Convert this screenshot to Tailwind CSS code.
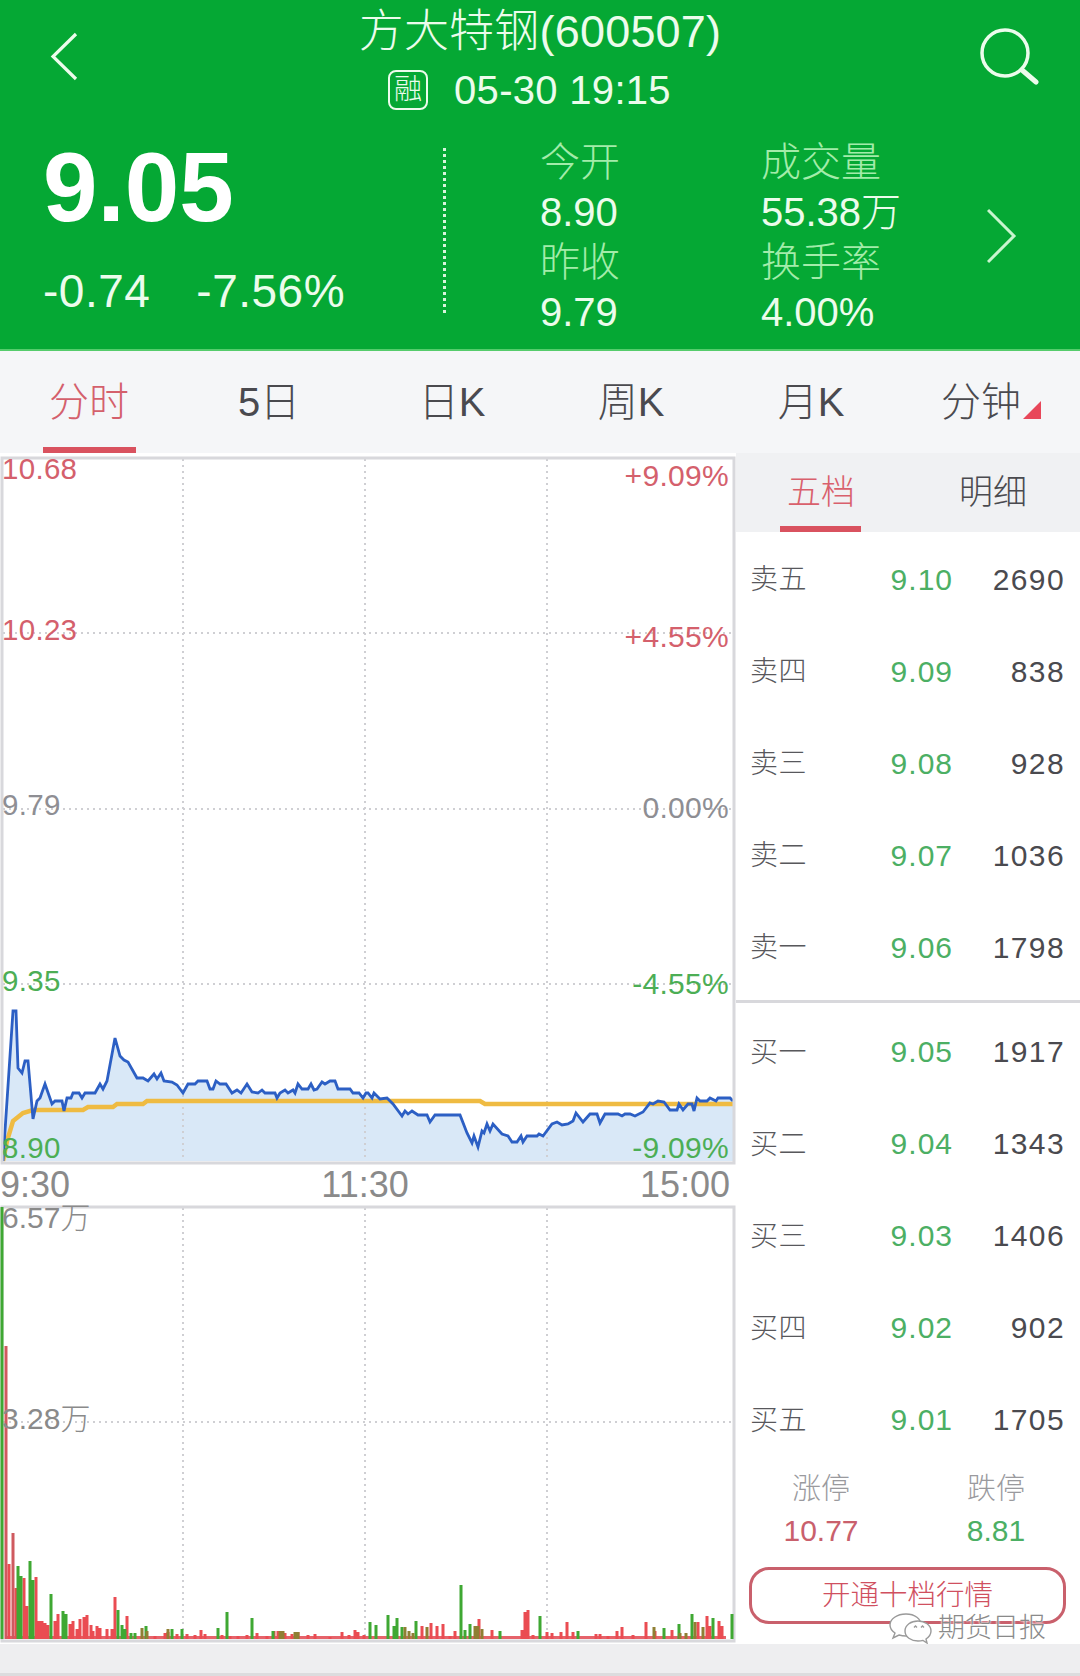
<!DOCTYPE html>
<html lang="zh">
<head>
<meta charset="utf-8">
<script src="https://cdn.jsdelivr.net/npm/@tailwindcss/browser@4"></script>
</head>
<body class="m-0">
<div class="relative w-[1080px] h-[1676px] overflow-hidden bg-[#f7f7f8] font-['Liberation_Sans','Noto_Sans_CJK_SC',sans-serif] font-light">

  <!-- green header -->
  <header class="h-[351px] bg-[#05a834] text-[#ecfcec] flex flex-col border-b-2 border-[#55cc6c]">
    <div class="h-[116px] flex">
      <div class="w-[180px] pl-[50px] pt-[32px]">
        <svg width="30" height="50" viewBox="0 0 30 50" fill="none" stroke="#ecfcec" stroke-width="3.2"><path d="M26 2 L3 24.5 L26 47"/></svg>
      </div>
      <div class="flex-1 flex flex-col items-center">
        <div class="h-[64px] flex items-center text-[45px] tracking-[0.2px] whitespace-nowrap">方大特钢(600507)</div>
        <div class="h-[52px] flex items-center gap-[26px] pr-[21px]">
          <span class="w-[40px] h-[40px] rounded-[8px] border-[2.5px] border-[#ecfcec] flex items-center justify-center text-[28px] leading-none">融</span>
          <span class="text-[40px] tracking-[0.3px] whitespace-nowrap">05-30 19:15</span>
        </div>
      </div>
      <div class="w-[180px] pl-[80px] pt-[27px]">
        <svg width="60" height="58" viewBox="0 0 60 58" fill="none" stroke="#ecfcec"><circle cx="25" cy="26" r="23" stroke-width="3.5"/><path d="M42 43 L56 55" stroke-width="5" stroke-linecap="round"/></svg>
      </div>
    </div>
    <div class="flex-1 flex">
      <div class="w-[443px] pl-[43px]">
        <div class="h-[142px] flex items-center text-[98px] font-bold text-white leading-none">9.05</div>
        <div class="h-[66px] flex items-center text-[46px] gap-[46px] tracking-[0.5px]"><span>-0.74</span><span>-7.56%</span></div>
      </div>
      <div class="mt-[32px] h-[165px] border-l-[3px] border-dotted border-[#d8f5dc]"></div>
      <div class="ml-[94px] w-[221px] pt-[21px] text-[40px]">
        <div class="h-[50px] flex items-center text-[#a3ecaa]">今开</div>
        <div class="h-[50px] flex items-center">8.90</div>
        <div class="h-[50px] flex items-center text-[#a3ecaa]">昨收</div>
        <div class="h-[50px] flex items-center">9.79</div>
      </div>
      <div class="w-[226px] pt-[21px] text-[40px]">
        <div class="h-[50px] flex items-center text-[#a3ecaa]">成交量</div>
        <div class="h-[50px] flex items-center">55.38万</div>
        <div class="h-[50px] flex items-center text-[#a3ecaa]">换手率</div>
        <div class="h-[50px] flex items-center">4.00%</div>
      </div>
      <div class="pt-[92px]">
        <svg width="30" height="56" viewBox="0 0 30 56" fill="none" stroke="#c9f5cf" stroke-width="3"><path d="M1 2 L27 28 L1 54"/></svg>
      </div>
    </div>
  </header>

  <!-- period tabs -->
  <nav class="h-[102px] bg-[#f5f6f8] flex text-[40px] text-[#4a4a4f]">
    <div class="relative w-[178px] flex items-center justify-center text-[#d4606c]">分时<span class="absolute left-[43px] bottom-0 w-[93px] h-[6px] bg-[#d9525f]"></span></div>
    <div class="w-[182px] flex items-center justify-center">5日</div>
    <div class="w-[184px] flex items-center justify-center">日K</div>
    <div class="w-[174px] flex items-center justify-center">周K</div>
    <div class="w-[186px] flex items-center justify-center">月K</div>
    <div class="relative w-[154px] flex items-center justify-center">分钟
      <svg class="absolute left-[119px] top-[50px]" width="18" height="18" viewBox="0 0 18 18"><path d="M0 18 L18 0 V18 Z" fill="#e8475a"/></svg>
    </div>
  </nav>

  <main class="flex h-[1191px]">
    <!-- charts -->
    <section class="w-[736px] bg-white flex flex-col">
      <div class="relative h-[712px]">
        <svg class="absolute inset-0" width="736" height="712" viewBox="0 452 736 712" fill="none">
          <g stroke="#cfcfd3" stroke-width="2" stroke-dasharray="2 4">
            <path d="M183 458V1160M365 458V1160M547 458V1160M3 632H733M3 808H733M3 983H733"/>
          </g>
          <path fill="#d9e8f7" stroke="none" d="M3 1160L13 1010L16 1010L18 1067L22 1072L25 1060L28 1060L33 1118L37 1100L40 1097L45 1083L52 1103L55 1100L62 1100L64 1110L67 1097L71 1097L73 1092L79 1092L82 1097L85 1092L95 1092L100 1083L103 1088L107 1080L115 1037L120 1055L124 1059L128 1061L137 1077L143 1077L148 1080L154 1073L157 1078L161 1072L164 1080L172 1081L177 1084L183 1092L188 1083L195 1083L198 1080L207 1080L210 1088L213 1088L216 1080L220 1083L226 1083L232 1092L237 1089L241 1092L247 1083L252 1091L258 1092L262 1089L265 1092L275 1092L277 1097L280 1092L285 1089L288 1092L293 1089L295 1092L298 1083L302 1088L308 1088L311 1083L314 1089L317 1088L322 1081L325 1083L330 1080L335 1080L338 1088L350 1088L353 1092L359 1092L363 1097L366 1092L368 1092L372 1097L374 1092L380 1098L387 1097L393 1103L402 1115L405 1110L408 1113L412 1110L418 1114L427 1114L430 1121L435 1114L460 1114L467 1132L472 1142L474 1135L478 1146L482 1130L484 1132L487 1123L490 1130L493 1123L502 1133L508 1135L512 1141L517 1141L521 1135L523 1141L527 1135L537 1135L539 1133L543 1135L552 1123L557 1121L562 1124L568 1123L573 1120L576 1112L583 1121L590 1113L597 1113L600 1122L605 1113L618 1113L622 1115L625 1113L630 1113L635 1115L643 1111L650 1102L653 1103L658 1100L664 1101L670 1109L677 1109L679 1103L683 1109L688 1103L692 1103L694 1110L697 1097L700 1100L707 1100L710 1097L716 1100L718 1097L730 1097L733 1100V1160Z"/>
          <path stroke="#cfcfd3" stroke-width="2" stroke-dasharray="2 4" d="M183 1040V1160M365 1040V1160M547 1100V1160"/>
          <path stroke="#efbb42" stroke-width="4.5" d="M3 1160L7 1140L13 1120L23 1112L33 1109L83 1109L88 1106L113 1106L117 1103L143 1103L147 1100L480 1100L485 1103L733 1103"/>
          <path stroke="#2c5fc4" stroke-width="2.8" stroke-linejoin="miter" d="M3 1160L13 1010L16 1010L18 1067L22 1072L25 1060L28 1060L33 1118L37 1100L40 1097L45 1083L52 1103L55 1100L62 1100L64 1110L67 1097L71 1097L73 1092L79 1092L82 1097L85 1092L95 1092L100 1083L103 1088L107 1080L115 1037L120 1055L124 1059L128 1061L137 1077L143 1077L148 1080L154 1073L157 1078L161 1072L164 1080L172 1081L177 1084L183 1092L188 1083L195 1083L198 1080L207 1080L210 1088L213 1088L216 1080L220 1083L226 1083L232 1092L237 1089L241 1092L247 1083L252 1091L258 1092L262 1089L265 1092L275 1092L277 1097L280 1092L285 1089L288 1092L293 1089L295 1092L298 1083L302 1088L308 1088L311 1083L314 1089L317 1088L322 1081L325 1083L330 1080L335 1080L338 1088L350 1088L353 1092L359 1092L363 1097L366 1092L368 1092L372 1097L374 1092L380 1098L387 1097L393 1103L402 1115L405 1110L408 1113L412 1110L418 1114L427 1114L430 1121L435 1114L460 1114L467 1132L472 1142L474 1135L478 1146L482 1130L484 1132L487 1123L490 1130L493 1123L502 1133L508 1135L512 1141L517 1141L521 1135L523 1141L527 1135L537 1135L539 1133L543 1135L552 1123L557 1121L562 1124L568 1123L573 1120L576 1112L583 1121L590 1113L597 1113L600 1122L605 1113L618 1113L622 1115L625 1113L630 1113L635 1115L643 1111L650 1102L653 1103L658 1100L664 1101L670 1109L677 1109L679 1103L683 1109L688 1103L692 1103L694 1110L697 1097L700 1100L707 1100L710 1097L716 1100L718 1097L730 1097L733 1100"/>
          <path stroke="#d8d8dc" stroke-width="3" d="M2 457H734V1162H2Z"/>
        </svg>
        <div class="absolute inset-0 text-[29.5px] leading-[36px] tracking-[0.3px]">
          <span class="absolute left-[2px] top-[-2px] text-[#d4606c]">10.68</span>
          <span class="absolute right-[7px] top-[5px] text-[30px] text-[#d4606c]">+9.09%</span>
          <span class="absolute left-[2px] top-[159px] text-[#d4606c]">10.23</span>
          <span class="absolute right-[7px] top-[166px] text-[30px] text-[#d4606c]">+4.55%</span>
          <span class="absolute left-[2px] top-[334px] text-[#8e8e93]">9.79</span>
          <span class="absolute right-[7px] top-[337px] text-[30px] text-[#8e8e93]">0.00%</span>
          <span class="absolute left-[2px] top-[510px] text-[#4cae55]">9.35</span>
          <span class="absolute right-[7px] top-[513px] text-[30px] text-[#4cae55]">-4.55%</span>
          <span class="absolute left-[2px] top-[677px] text-[#4cae55]">8.90</span>
          <span class="absolute right-[7px] top-[677px] text-[30px] text-[#4cae55]">-9.09%</span>
        </div>
      </div>
      <div class="h-[40px] flex justify-between items-center pr-[6px] text-[36px] text-[#8a8a8a] leading-none">
        <span>9:30</span><span class="ml-[20px]">11:30</span><span>15:00</span>
      </div>
      <div class="relative h-[439px]">
        <svg class="absolute inset-0" width="736" height="439" viewBox="0 1204 736 439" fill="none">
          <path stroke="#cfcfd3" stroke-width="2" stroke-dasharray="2 4" d="M183 1207V1636M365 1207V1636M547 1207V1636M3 1421H733"/>
          <path stroke="#d8d8dc" stroke-width="3" d="M2 1206H734V1640H2Z"/>
          <path stroke="#e6636a" stroke-width="3" d="M5 1636.5H726"/>
          <g stroke-width="3">
            <path stroke="#cf5a5f" d="M6 1638v-293M13 1638v-106"/>
            <path stroke="#ea4c52" d="M9 1638v-75M16 1638v-51M24 1638v-61M27 1638v-33M36 1638v-62M39 1638v-18M42 1638v-18M45 1638v-16M48 1638v-14M55 1638v-18M58 1638v-25M70 1638v-15M73 1638v-18M77 1638v-10M80 1638v-20M84 1638v-22M87 1638v-24M91 1638v-14M93 1638v-8M97 1638v-13M100 1638v-11M107 1638v-10M112 1638v-10M115 1638v-42M127 1638v-23M155 1638v-3M165 1638v-6M168 1638v-7M177 1638v-5M187 1638v-5M195 1638v-4M201 1638v-9M205 1638v-5M222 1638v-4M230 1638v-3M238 1638v-3M247 1638v-4M257 1638v-6M267 1638v-3M274 1638v-8M278 1638v-8M285 1638v-6M292 1638v-5M298 1638v-7M308 1638v-4M315 1638v-5M330 1638v-2M342 1638v-7M349 1638v-4M355 1638v-9M358 1638v-7M364 1638v-4M422 1638v-13M431 1638v-16M437 1638v-13M443 1638v-15M450 1638v-3M455 1638v-8M479 1638v-20M492 1638v-9M522 1638v-9M525 1638v-27M528 1638v-29M533 1638v-4M547 1638v-7M552 1638v-6M561 1638v-7M567 1638v-17M573 1638v-7M596 1638v-5M600 1638v-5M608 1638v-3M617 1638v-8M622 1638v-12M633 1638v-4M646 1638v-17M655 1638v-8M672 1638v-9M698 1638v-17M707 1638v-23M710 1638v-13M719 1638v-18M722 1638v-13"/>
            <path stroke="#3fa833" d="M2 1638v-432M18 1638v-73M21 1638v-63M30 1638v-78M33 1638v-59M51 1638v-45M63 1638v-28M66 1638v-25M118 1638v-29M122 1638v-14M125 1638v-10M131 1638v-6M135 1638v-6M146 1638v-13M172 1638v-10M182 1638v-10M218 1638v-11M227 1638v-27M252 1638v-21M273 1638v-8M370 1638v-17M376 1638v-14M388 1638v-24M394 1638v-13M397 1638v-21M402 1638v-12M416 1638v-18M461 1638v-54M465 1638v-9M470 1638v-15M500 1638v-8M540 1638v-23M578 1638v-8M664 1638v-11M679 1638v-15M692 1638v-25M713 1638v-21M732 1638v-25"/>
            <path stroke="#8f7f33" d="M142 1638v-11M147 1638v-8M168 1638v-10M280 1638v-8M283 1638v-8M295 1638v-7M298 1638v-7M405 1638v-12M409 1638v-8M413 1638v-6M427 1638v-12M475 1638v-13M478 1638v-13M482 1638v-10M654 1638v-12M680 1638v-6M686 1638v-6M695 1638v-17M703 1638v-12"/>
          </g>
        </svg>
        <div class="absolute inset-0 text-[30px] leading-[36px] text-[#8a8a8a]">
          <span class="absolute left-[2px] top-[-5px]">6.57万</span>
          <span class="absolute left-[2px] top-[196px]">3.28万</span>
        </div>
      </div>
    </section>

    <!-- order book -->
    <aside class="flex-1 bg-white flex flex-col">
      <div class="relative h-[79px] bg-[#f0f1f3] flex text-[34px] text-[#4a4a4f]">
        <div class="w-[170px] flex items-center justify-center text-[#d9606c]">五档<span class="absolute left-[44px] bottom-0 w-[81px] h-[6px] bg-[#d9525f]"></span></div>
        <div class="flex-1 flex items-center justify-center">明细</div>
      </div>
      <div class="mt-[2px] text-[30px] tracking-[1.4px]">
        <div class="h-[92px] flex items-center pl-[14px] pr-[15px]"><span class="w-[102px] text-[28px] tracking-[0.5px] text-[#58585c]">卖五</span><span class="w-[101px] mb-[2px] text-right tracking-[1px] text-[#4caf64]">9.10</span><span class="flex-1 mb-[2px] text-right text-[#4a4a4f]">2690</span></div>
        <div class="h-[92px] flex items-center pl-[14px] pr-[15px]"><span class="w-[102px] text-[28px] tracking-[0.5px] text-[#58585c]">卖四</span><span class="w-[101px] mb-[2px] text-right tracking-[1px] text-[#4caf64]">9.09</span><span class="flex-1 mb-[2px] text-right text-[#4a4a4f]">838</span></div>
        <div class="h-[92px] flex items-center pl-[14px] pr-[15px]"><span class="w-[102px] text-[28px] tracking-[0.5px] text-[#58585c]">卖三</span><span class="w-[101px] mb-[2px] text-right tracking-[1px] text-[#4caf64]">9.08</span><span class="flex-1 mb-[2px] text-right text-[#4a4a4f]">928</span></div>
        <div class="h-[92px] flex items-center pl-[14px] pr-[15px]"><span class="w-[102px] text-[28px] tracking-[0.5px] text-[#58585c]">卖二</span><span class="w-[101px] mb-[2px] text-right tracking-[1px] text-[#4caf64]">9.07</span><span class="flex-1 mb-[2px] text-right text-[#4a4a4f]">1036</span></div>
        <div class="h-[92px] flex items-center pl-[14px] pr-[15px]"><span class="w-[102px] text-[28px] tracking-[0.5px] text-[#58585c]">卖一</span><span class="w-[101px] mb-[2px] text-right tracking-[1px] text-[#4caf64]">9.06</span><span class="flex-1 mb-[2px] text-right text-[#4a4a4f]">1798</span></div>
        <div class="h-[13px] pt-[6px]"><div class="h-[3px] bg-[#d8d8dc]"></div></div>
        <div class="h-[92px] flex items-center pl-[14px] pr-[15px]"><span class="w-[102px] text-[28px] tracking-[0.5px] text-[#58585c]">买一</span><span class="w-[101px] mb-[4px] text-right tracking-[1px] text-[#4caf64]">9.05</span><span class="flex-1 mb-[4px] text-right text-[#4a4a4f]">1917</span></div>
        <div class="h-[92px] flex items-center pl-[14px] pr-[15px]"><span class="w-[102px] text-[28px] tracking-[0.5px] text-[#58585c]">买二</span><span class="w-[101px] mb-[4px] text-right tracking-[1px] text-[#4caf64]">9.04</span><span class="flex-1 mb-[4px] text-right text-[#4a4a4f]">1343</span></div>
        <div class="h-[92px] flex items-center pl-[14px] pr-[15px]"><span class="w-[102px] text-[28px] tracking-[0.5px] text-[#58585c]">买三</span><span class="w-[101px] mb-[4px] text-right tracking-[1px] text-[#4caf64]">9.03</span><span class="flex-1 mb-[4px] text-right text-[#4a4a4f]">1406</span></div>
        <div class="h-[92px] flex items-center pl-[14px] pr-[15px]"><span class="w-[102px] text-[28px] tracking-[0.5px] text-[#58585c]">买四</span><span class="w-[101px] mb-[4px] text-right tracking-[1px] text-[#4caf64]">9.02</span><span class="flex-1 mb-[4px] text-right text-[#4a4a4f]">902</span></div>
        <div class="h-[92px] flex items-center pl-[14px] pr-[15px]"><span class="w-[102px] text-[28px] tracking-[0.5px] text-[#58585c]">买五</span><span class="w-[101px] mb-[4px] text-right tracking-[1px] text-[#4caf64]">9.01</span><span class="flex-1 mb-[4px] text-right text-[#4a4a4f]">1705</span></div>
      </div>
      <div class="flex text-[29px]">
        <div class="w-[170px] flex flex-col items-center">
          <span class="h-[46px] flex items-center text-[#9a9a9e]">涨停</span>
          <span class="h-[34px] flex items-center text-[#c9606c] text-[30px]">10.77</span>
        </div>
        <div class="ml-[6px] flex-1 flex flex-col items-center">
          <span class="h-[46px] flex items-center text-[#9a9a9e]">跌停</span>
          <span class="h-[34px] flex items-center text-[#4caf64] text-[30px]">8.81</span>
        </div>
      </div>
      <div class="mt-[20px] ml-[13px] w-[317px] h-[57px] rounded-[20px] border-[3px] border-[#c9606c] flex items-center justify-center text-[28.5px] text-[#d0505f]">开通十档行情</div>
    </aside>
  </main>

  <!-- bottom strip -->
  <div class="h-[29px] bg-[#eeeef0]"></div>
  <div class="h-[3px] bg-[#dcdcde]"></div>

  <!-- watermark -->
  <div class="absolute left-[888px] top-[1612px] flex items-center gap-[6px] text-[27px] text-[#8a8a8a] leading-none [text-shadow:0_0_2px_white,0_0_2px_white]">
    <svg width="44" height="32" viewBox="0 0 44 32" fill="#fff" stroke="#9a9a9a" stroke-width="1.4"><path d="M18 2C9 2 2 7 2 13c0 3 2 6 5 8l-2 5 6-3c2 .6 4 1 7 1 9 0 15-5 15-11S27 2 18 2Z"/><path d="M30 9c-7 0-13 4-13 10s6 10 13 10c2 0 3 0 5-.6l4 2.6-1-4c3-2 5-5 5-8 0-6-6-10-13-10Z"/><path d="M26 15.5l1.5-1.5 1.5 1.5M33 15.5l1.5-1.5 1.5 1.5" fill="none"/></svg>
    <span>期货日报</span>
  </div>
</div>
</body>
</html>
